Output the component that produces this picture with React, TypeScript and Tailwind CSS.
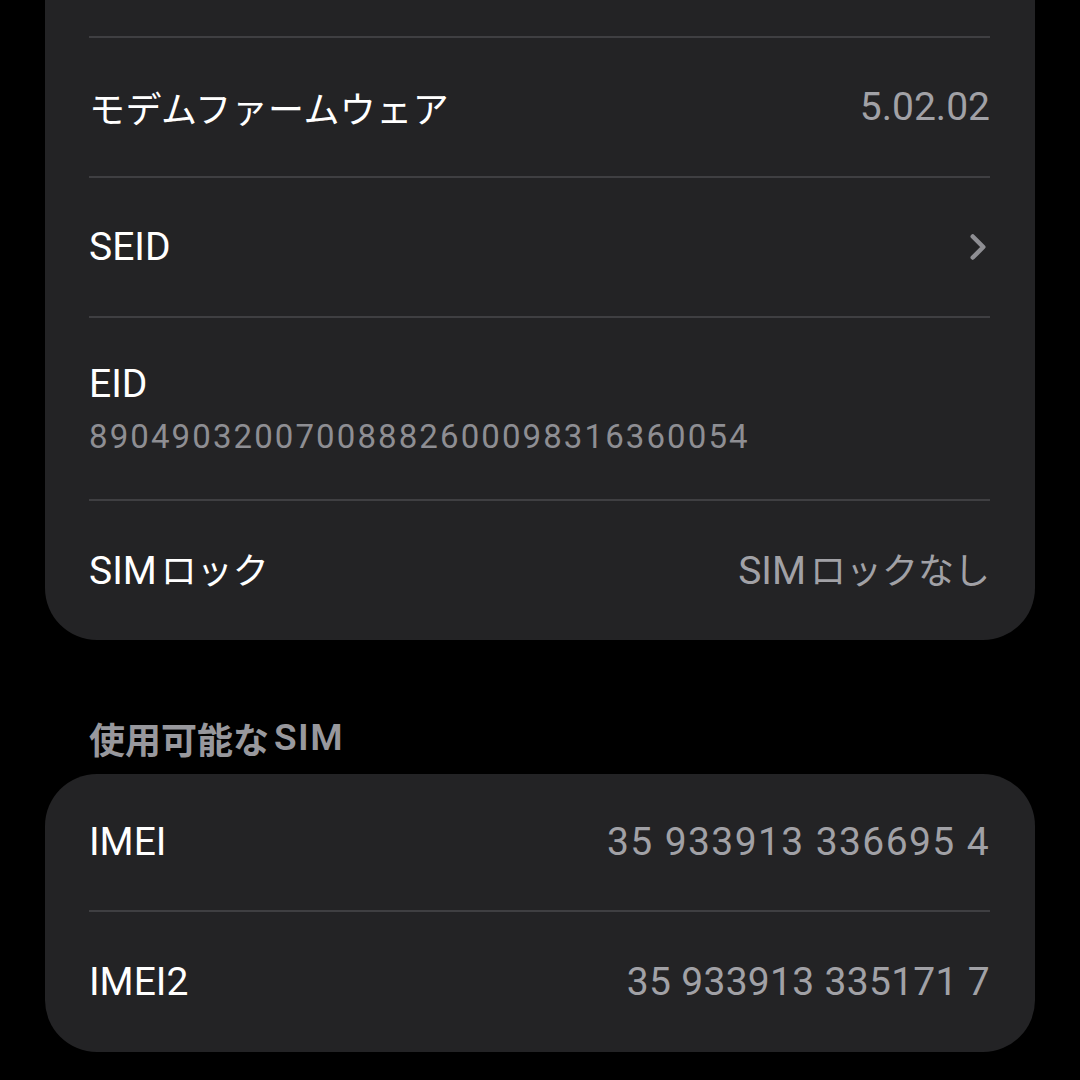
import { ChevronRight } from 'lucide-react';

const latin = "font-['Roboto','Noto_Sans_CJK_JP',sans-serif]";

function Divider() {
  return <div className="h-[2px] bg-[#3f3f42]" />;
}

function Jp({ children, className = '' }: { children: React.ReactNode; className?: string }) {
  return <span className={`text-[36px] font-['Noto_Sans_CJK_JP',sans-serif] ${className}`}>{children}</span>;
}

export default function App() {
  return (
    <div className={`h-[1080px] w-[1080px] overflow-hidden bg-black text-white ${latin}`}>
      {/* card running on from above */}
      <div className="mx-[45px] rounded-b-[52px] bg-[#232325] pl-[44px] pr-[45px]">
        <div className="h-[36px]" />
        <Divider />
        <div className="flex h-[138px] items-center justify-between">
          <Jp className="tracking-[0.4px]">モデムファームウェア</Jp>
          <span className="text-[39px] text-[#a1a1a6]">5.02.02</span>
        </div>
        <Divider />
        <div className="flex h-[138px] items-center justify-between">
          <span className="text-[39px]">SEID</span>
          <ChevronRight className="mr-[-9px] h-[42px] w-[42px] text-[#8e8e93]" strokeWidth={2.6} />
        </div>
        <Divider />
        <div className="flex h-[181px] flex-col justify-center">
          <span className="text-[39px] leading-[48px]">EID</span>
          <span className="mt-[9px] text-[33px] leading-[40px] tracking-[2.1px] text-[#8e8e93]">
            89049032007008882600098316360054
          </span>
        </div>
        <Divider />
        <div className="flex h-[139px] items-center justify-between">
          <span className="text-[39px]">
            SIM<Jp className="ml-[4px]">ロック</Jp>
          </span>
          <span className="text-[39px] text-[#a1a1a6]">
            SIM<Jp className="ml-[4px]">ロックなし</Jp>
          </span>
        </div>
      </div>

      <div className="flex h-[134px] items-center pl-[89px] pt-[62px] font-semibold text-[#98989d]">
        <span className="text-[36px] font-['Noto_Sans_CJK_JP',sans-serif]">使用可能な</span>
        <span className="ml-[5px] text-[37px] tracking-[1.5px]">SIM</span>
      </div>

      <div className="mx-[45px] rounded-[52px] bg-[#232325] pl-[44px] pr-[45px]">
        <div className="flex h-[136px] items-center justify-between">
          <span className="text-[39px]">IMEI</span>
          <span className="text-[39px] tracking-[1.4px] text-[#a1a1a6]">35 933913 336695 4</span>
        </div>
        <Divider />
        <div className="flex h-[140px] items-center justify-between">
          <span className="text-[39px]">IMEI2</span>
          <span className="text-[39px] tracking-[0.3px] text-[#a1a1a6]">35 933913 335171 7</span>
        </div>
      </div>
    </div>
  );
}
